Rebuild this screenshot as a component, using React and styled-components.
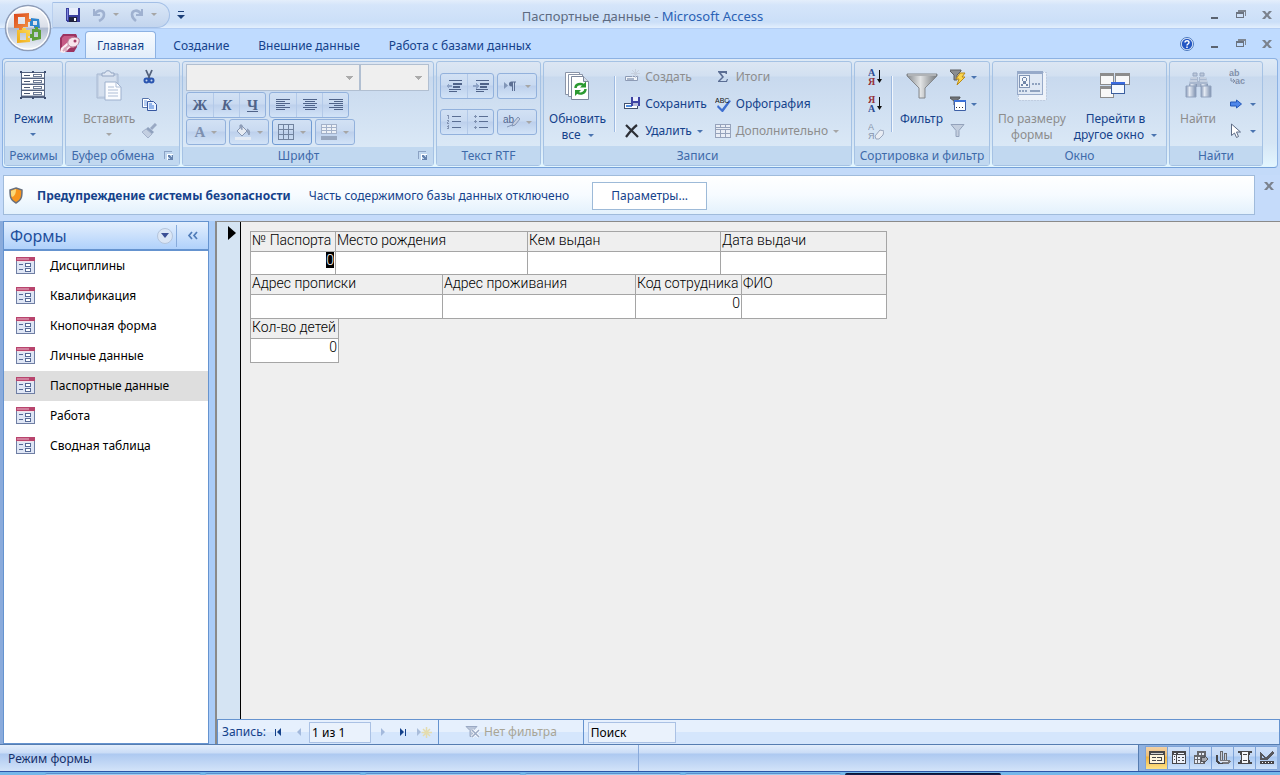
import React, { useEffect, useRef } from "react";
import styled, { createGlobalStyle } from "styled-components";

const forms = [
  "Дисциплины",
  "Квалификация",
  "Кнопочная форма",
  "Личные данные",
  "Паспортные данные",
  "Работа",
  "Сводная таблица",
];

const fieldRows = [
  {
    columns: "84px 191px 192px 165px",
    fields: [
      { id: "passport", label: "№ Паспорта", value: "0", first: true },
      { id: "birthplace", label: "Место рождения", value: "" },
      { id: "issuer", label: "Кем выдан", value: "" },
      { id: "issued", label: "Дата выдачи", value: "" },
    ],
  },
  {
    columns: "191px 192px 105px 144px",
    fields: [
      { id: "registered", label: "Адрес прописки", value: "" },
      { id: "residence", label: "Адрес проживания", value: "" },
      { id: "employee", label: "Код сотрудника", value: "0" },
      { id: "fullname", label: "ФИО", value: "" },
    ],
  },
  {
    columns: "87px",
    fields: [{ id: "children", label: "Кол-во детей", value: "0" }],
  },
];

const App = () => {
  return (
    <>
      <GlobalStyle />
      <Window>
        <OfficeButton aria-label="Кнопка Office">
          <OfficeLogo />
        </OfficeButton>
        <TitleBar />
        <TabBar />
        <Ribbon />
        <SecurityBar />
        <Workspace>
          <NavigationPane />
          <Document />
        </Workspace>
        <StatusBar />
        <Taskbar>
          <Task />
          <Task />
          <Task />
          <Task />
          <Task />
          <Task $active />
        </Taskbar>
      </Window>
    </>
  );
};

export default App;

const TitleBar = () => (
  <TitleRow>
    <QuickAccess>
      <IconButton aria-label="Сохранить">
        <SaveIcon />
      </IconButton>
      <IconButton aria-label="Отменить" disabled>
        <UndoIcon />
        <Caret $muted />
      </IconButton>
      <IconButton aria-label="Вернуть" disabled>
        <RedoIcon />
        <Caret $muted />
      </IconButton>
    </QuickAccess>
    <IconButton aria-label="Настройка панели быстрого доступа">
      <CustomizeIcon />
    </IconButton>
    <WindowTitle>
      <span>Паспортные данные -</span> Microsoft Access
    </WindowTitle>
    <WindowControls />
  </TitleRow>
);

const WindowControls = () => (
  <Controls>
    <IconButton aria-label="Свернуть">
      <svg width="10" height="12" viewBox="0 0 10 12">
        <path d="M1 8h7v2H1z" fill="#5b6370" />
      </svg>
    </IconButton>
    <IconButton aria-label="Восстановить">
      <svg width="10" height="12" viewBox="0 0 10 12" shapeRendering="crispEdges">
        <path d="M2 1h8v6H9V3H2z" fill="#7f8792" />
        <path d="M0 3h8v6H0zM1 5v3h6V5z" fill="#6b737f" fillRule="evenodd" />
      </svg>
    </IconButton>
    <IconButton aria-label="Закрыть">
      <CloseIcon />
    </IconButton>
  </Controls>
);

const TabBar = () => (
  <TabRow>
    <AccessIcon />
    <Tabs>
      <Tab $active>Главная</Tab>
      <Tab>Создание</Tab>
      <Tab>Внешние данные</Tab>
      <Tab>Работа с базами данных</Tab>
    </Tabs>
    <IconButton aria-label="Справка">
      <HelpIcon />
    </IconButton>
    <WindowControls />
  </TabRow>
);

const Ribbon = () => (
  <RibbonPanel>
    <Group $width="59px">
      <GroupBody>
        <LargeButton>
          <ModeIcon />
          <span>Режим</span>
          <Caret />
        </LargeButton>
      </GroupBody>
      <GroupLabel>Режимы</GroupLabel>
    </Group>

    <Group $width="115px">
      <GroupBody $gap="6px" $pad="17px">
        <LargeButton disabled>
          <PasteIcon />
          <span>Вставить</span>
          <Caret $muted />
        </LargeButton>
        <CommandColumn>
          <Command aria-label="Вырезать">
            <CutIcon />
          </Command>
          <Command aria-label="Копировать">
            <CopyIcon />
          </Command>
          <Command aria-label="Формат по образцу" disabled>
            <BrushIcon />
          </Command>
        </CommandColumn>
      </GroupBody>
      <GroupLabel $launcher>
        <span>Буфер обмена</span>
        <LauncherIcon />
      </GroupLabel>
    </Group>

    <Group $width="252px">
      <FontBody>
        <FontRow $gap="0">
          <FontSelect aria-label="Шрифт" $width="174px" disabled />
          <FontSelect aria-label="Размер шрифта" $width="69px" disabled />
        </FontRow>
        <FontRow>
          <ButtonSet>
            <ToolButton disabled>Ж</ToolButton>
            <ToolButton $italic disabled>К</ToolButton>
            <ToolButton $underline disabled>Ч</ToolButton>
          </ButtonSet>
          <ButtonSet>
            <ToolButton aria-label="По левому краю" disabled>
              <AlignIcon x={[0, 0, 0, 0, 0, 0]} />
            </ToolButton>
            <ToolButton aria-label="По центру" disabled>
              <AlignIcon x={[0, 2, 0, 2, 0, 2]} />
            </ToolButton>
            <ToolButton aria-label="По правому краю" disabled>
              <AlignIcon x={[0, 5, 0, 5, 0, 5]} />
            </ToolButton>
          </ButtonSet>
        </FontRow>
        <FontRow>
          <ButtonSet>
            <ToolButton $wide $faded disabled>
              А<Caret $muted />
            </ToolButton>
          </ButtonSet>
          <ButtonSet>
            <ToolButton $wide aria-label="Цвет заливки" disabled>
              <FillIcon />
              <Caret $muted />
            </ToolButton>
          </ButtonSet>
          <ButtonSet $strong>
            <ToolButton $wide aria-label="Сетка" disabled>
              <GridIcon />
              <Caret $muted />
            </ToolButton>
          </ButtonSet>
          <ButtonSet>
            <ToolButton $wide aria-label="Цвет строк" disabled>
              <RowColorIcon />
              <Caret $muted />
            </ToolButton>
          </ButtonSet>
        </FontRow>
      </FontBody>
      <GroupLabel $launcher>
        <span>Шрифт</span>
        <LauncherIcon />
      </GroupLabel>
    </Group>

    <Group $width="105px">
      <RtfBody>
        <FontRow>
          <ButtonSet>
            <ToolButton aria-label="Уменьшить отступ" disabled>
              <IndentIcon />
            </ToolButton>
            <ToolButton aria-label="Увеличить отступ" disabled>
              <IndentIcon right />
            </ToolButton>
          </ButtonSet>
          <ButtonSet>
            <ToolButton $wide aria-label="Направление текста" disabled>
              <ParagraphIcon />
              <Caret $muted />
            </ToolButton>
          </ButtonSet>
        </FontRow>
        <FontRow>
          <ButtonSet>
            <ToolButton aria-label="Нумерация" disabled>
              <NumberingIcon />
            </ToolButton>
            <ToolButton aria-label="Маркеры" disabled>
              <BulletsIcon />
            </ToolButton>
          </ButtonSet>
          <ButtonSet>
            <ToolButton $wide aria-label="Цвет выделения" disabled>
              <HighlightIcon />
              <Caret $muted />
            </ToolButton>
          </ButtonSet>
        </FontRow>
      </RtfBody>
      <GroupLabel>Текст RTF</GroupLabel>
    </Group>

    <Group $width="309px">
      <GroupBody $gap="8px" $pad="5px">
        <LargeButton>
          <RefreshIcon />
          <span>Обновить</span>
          <span>
            все <Caret $inline />
          </span>
        </LargeButton>
        <Separator />
        <CommandColumn>
          <Command disabled>
            <NewRecordIcon />
            Создать
          </Command>
          <Command>
            <SaveRecordIcon />
            Сохранить
          </Command>
          <Command>
            <DeleteIcon />
            Удалить
            <Caret />
          </Command>
        </CommandColumn>
        <CommandColumn>
          <Command disabled>
            <SigmaIcon />
            Итоги
          </Command>
          <Command>
            <SpellingIcon />
            Орфография
          </Command>
          <Command disabled>
            <MoreIcon />
            Дополнительно
            <Caret $muted />
          </Command>
        </CommandColumn>
      </GroupBody>
      <GroupLabel>Записи</GroupLabel>
    </Group>

    <Group $width="136px">
      <GroupBody $gap="7px" $pad="13px">
        <CommandColumn>
          <Command aria-label="По возрастанию">
            <SortIcon top="А" bottom="Я" />
          </Command>
          <Command aria-label="По убыванию">
            <SortIcon top="Я" bottom="А" />
          </Command>
          <Command aria-label="Очистить сортировку" disabled>
            <ClearSortIcon />
          </Command>
        </CommandColumn>
        <Separator />
        <LargeButton>
          <FilterIcon />
          <span>Фильтр</span>
        </LargeButton>
        <CommandColumn>
          <Command aria-label="Выделение">
            <SelectionFilterIcon />
            <Caret />
          </Command>
          <Command aria-label="Дополнительно">
            <AdvancedFilterIcon />
            <Caret />
          </Command>
          <Command aria-label="Применить фильтр" disabled>
            <ToggleFilterIcon />
          </Command>
        </CommandColumn>
      </GroupBody>
      <GroupLabel>Сортировка и фильтр</GroupLabel>
    </Group>

    <Group $width="175px">
      <GroupBody $gap="8px" $pad="5px">
        <LargeButton disabled>
          <FitFormIcon />
          <span>По размеру</span>
          <span>формы</span>
        </LargeButton>
        <LargeButton>
          <SwitchWindowIcon />
          <span>Перейти в</span>
          <span>
            другое окно <Caret $inline />
          </span>
        </LargeButton>
      </GroupBody>
      <GroupLabel>Окно</GroupLabel>
    </Group>

    <Group $width="94px">
      <GroupBody $gap="13px" $pad="10px">
        <LargeButton disabled>
          <BinocularsIcon />
          <span>Найти</span>
        </LargeButton>
        <CommandColumn>
          <Command aria-label="Заменить" disabled>
            <ReplaceIcon />
          </Command>
          <Command aria-label="Перейти">
            <GoToIcon />
            <Caret />
          </Command>
          <Command aria-label="Выбрать">
            <PointerIcon />
            <Caret />
          </Command>
        </CommandColumn>
      </GroupBody>
      <GroupLabel>Найти</GroupLabel>
    </Group>
  </RibbonPanel>
);

const SecurityBar = () => (
  <SecurityRow>
    <SecurityMessage>
      <ShieldIcon />
      <strong>Предупреждение системы безопасности</strong>
      <span>Часть содержимого базы данных отключено</span>
      <OptionsButton>Параметры...</OptionsButton>
    </SecurityMessage>
    <IconButton aria-label="Закрыть предупреждение">
      <CloseIcon />
    </IconButton>
  </SecurityRow>
);

const NavigationPane = () => (
  <Pane>
    <PaneHeader>
      <PaneTitle>Формы</PaneTitle>
      <RoundButton aria-label="Категория">
        <svg width="8" height="5" viewBox="0 0 8 5">
          <path d="M0 0h8L4 5z" fill="#3c4f94" />
        </svg>
      </RoundButton>
      <PaneDivider />
      <IconButton aria-label="Свернуть область">
        <svg width="12" height="10" viewBox="0 0 12 10">
          <path d="M5 1L2 4.500L5 8M10 1L7 4.500L10 8" fill="none" stroke="#4f7bb8" strokeWidth="1.700" />
        </svg>
      </IconButton>
    </PaneHeader>
    <FormList>
      {forms.map((name) => (
        <li key={name}>
          <FormLink href="#" $selected={name === "Паспортные данные"}>
            <FormIcon />
            {name}
          </FormLink>
        </li>
      ))}
    </FormList>
  </Pane>
);

const Document = () => {
  const firstField = useRef(null);

  useEffect(() => {
    firstField.current.focus();
    firstField.current.select();
  }, []);

  return (
    <DocumentPanel>
      <FormView>
        <RecordSelector>
          <svg width="8" height="14" viewBox="0 0 8 14">
            <path d="M0 0L8 7L0 14z" fill="#000" />
          </svg>
        </RecordSelector>
        <FormFields>
          {fieldRows.map((row) => (
            <FieldRow key={row.columns} $columns={row.columns}>
              {row.fields.map((field) => (
                <FieldCell key={field.id}>
                  <FieldLabel htmlFor={field.id}>{field.label}</FieldLabel>
                  <FieldInput
                    id={field.id}
                    ref={field.first ? firstField : null}
                    defaultValue={field.value}
                  />
                </FieldCell>
              ))}
            </FieldRow>
          ))}
        </FormFields>
      </FormView>
      <RecordNav>
        <NavLabel htmlFor="record">Запись:</NavLabel>
        <NavButton aria-label="Первая запись">
          <RecordArrow d="M1 1h1v7H1zM7 0v8L3 4z" />
        </NavButton>
        <NavButton aria-label="Предыдущая запись" disabled>
          <RecordArrow d="M6 0v8L2 4z" />
        </NavButton>
        <NavInput id="record" defaultValue="1 из 1" $width="62px" />
        <NavButton aria-label="Следующая запись" disabled>
          <RecordArrow d="M3 0v8L7 4z" />
        </NavButton>
        <NavButton aria-label="Последняя запись">
          <RecordArrow d="M1 0v8L5 4zM6 1h1v7H6z" />
        </NavButton>
        <NavButton aria-label="Новая запись" disabled>
          <svg width="16" height="11" viewBox="0 0 16 11">
            <path d="M1 1v8L5 5z" fill="#a9bddb" />
            <path d="M10.500 0v11M5.500 5.500H16M7 2L14 9M14 2L7 9" stroke="#e4dcae" strokeWidth="1.500" />
          </svg>
        </NavButton>
        <NavDivider />
        <FilterState disabled>
          <NoFilterIcon />
          Нет фильтра
        </FilterState>
        <NavDivider />
        <NavInput aria-label="Поиск" defaultValue="Поиск" $width="88px" />
      </RecordNav>
    </DocumentPanel>
  );
};

const StatusBar = () => (
  <StatusRow>
    <StatusText>Режим формы</StatusText>
    <StatusDetail />
    <ViewButtons>
      <ViewButton aria-label="Режим формы" $active>
        <ViewIcon>
          <path d="M0 0h16v13H0zM1 4v8h14V4z" fill="#47474a" fillRule="evenodd" />
          <path d="M1 4h14v8H1z" fill="#fff6de" />
          <path d="M2 2h12v1H2z" fill="#d2d2d2" />
          <path d="M3 6h4v1H3zM3 9h4v1H3zM8 6h5v1H8zM8 9h5v1H8zM12 7h1v2h-1z" fill="#47474a" />
        </ViewIcon>
      </ViewButton>
      <ViewButton aria-label="Режим таблицы">
        <ViewIcon>
          <path d="M1 0h14v13H1z" fill="#47474a" />
          <path d="M3 2h2v1H3zM7 2h6v1H7zM2 4h3v8H2zM6 4h8v8H6z" fill="#eef2fa" />
          <path d="M3 5h1v1H3zM3 8h1v1H3zM7 6h2v1H7zM11 6h2v1h-2zM7 9h2v1H7zM11 9h2v1h-2z" fill="#47474a" />
        </ViewIcon>
      </ViewButton>
      <ViewButton aria-label="Сводная таблица">
        <ViewIcon>
          <path d="M4 0h9v9H4zM1 4h11v9H1z" fill="#66676c" />
          <path d="M6 2h2v2H6zM9 2h2v2H9zM2 6h2v2H2zM5 6h2v2H5zM2 9h2v3H2zM5 9h2v3H5zM8 10h2v2H8z" fill="#e7ecf5" />
          <path d="M8 6h3V4l4 4l-4 4v-2H8z" fill="#a4a6ad" stroke="#55565b" />
        </ViewIcon>
      </ViewButton>
      <ViewButton aria-label="Сводная диаграмма">
        <ViewIcon>
          <path d="M5 0h3v9H5zM9 2h3v7H9z" fill="#66676c" />
          <path d="M6 1h1v8H6zM10 3h1v6h-1z" fill="#c9cdd6" />
          <path d="M1 4h2v6l2 2h7v1H3l-2-2z" fill="#47474a" />
          <path d="M5 9h9l2 1l-3 3H8z" fill="#77797f" />
          <path d="M5 10h8v1H5z" fill="#e1e5ee" />
        </ViewIcon>
      </ViewButton>
      <ViewButton aria-label="Режим макета">
        <ViewIcon>
          <path d="M4 1h8v11H4z" fill="#f5f7fb" />
          <path d="M1 0h4v2H1zM11 0h4v2h-4zM3 2h2v2H3zM11 2h2v2h-2zM3 9h2v2H3zM11 9h2v2h-2zM1 11h4v2H1zM11 11h4v2h-4zM5 0h6v1H5zM5 12h6v1H5zM6 3h4v1H6zM6 9h4v1H6zM4 4h1v5H4zM11 4h1v5h-1z" fill="#47474a" />
        </ViewIcon>
      </ViewButton>
      <ViewButton aria-label="Конструктор">
        <ViewIcon>
          <path d="M1 1v8h8zM3 5v2h2z" fill="#57585d" fillRule="evenodd" />
          <path d="M6 7l2 2L15 2L13 0z" fill="#57585d" />
          <path d="M1 10h14v3H1z" fill="#47474a" />
          <path d="M3 11h1v1H3zM6 11h1v1H6zM9 11h1v1H9zM12 11h1v1h-1z" fill="#fff" />
        </ViewIcon>
      </ViewButton>
    </ViewButtons>
  </StatusRow>
);

/* icons */

const OfficeLogo = () => (
  <svg width="48" height="48" viewBox="0 0 48 48">
    <defs>
      <linearGradient id="orb" x1="0" y1="0" x2="0" y2="1">
        <stop offset="0" stopColor="#fbfbfc" />
        <stop offset="0.48" stopColor="#d9dee8" />
        <stop offset="0.5" stopColor="#aebacf" />
        <stop offset="1" stopColor="#f5f8fb" />
      </linearGradient>
      <linearGradient id="red" x1="0" y1="0" x2="1" y2="1">
        <stop offset="0" stopColor="#d9431a" />
        <stop offset="1" stopColor="#f7a14a" />
      </linearGradient>
      <linearGradient id="yellow" x1="0" y1="1" x2="1" y2="0">
        <stop offset="0" stopColor="#f0a813" />
        <stop offset="1" stopColor="#fbdc5c" />
      </linearGradient>
    </defs>
    <circle cx="24" cy="24" r="22.500" fill="url(#orb)" stroke="#8e9db8" strokeWidth="1.500" />
    <circle cx="24" cy="24" r="21" fill="none" stroke="#fff" strokeWidth="1.200" />
    <path d="M10 10l15-1v6l3 0v3h-4v5h-5v3h-4v-2l-5 0zM14 13v7h7v-7z" fill="url(#red)" fillRule="evenodd" />
    <path d="M27 14l8 1l1 9l-6 0v-2h-4v-5h1zM29 17v4h4v-4z" fill="#2f86cf" fillRule="evenodd" />
    <path d="M13 26l5 0v-2h4v2h4v6h-2v2h2v4l-13 1zM16 29v7h6v-7z" fill="url(#yellow)" fillRule="evenodd" />
    <path d="M28 25h3v-2h3v2l3 1v9l-9 2v-3h-2v-4h2zM30 28v5h4v-5z" fill="#5d9e3b" fillRule="evenodd" />
  </svg>
);

const SaveIcon = () => (
  <svg width="16" height="16" viewBox="0 0 16 16" shapeRendering="crispEdges">
    <path d="M1 1h14v14H2l-1-1z" fill="#3a3f9e" />
    <path d="M4 1h9v7H4z" fill="#e8eefc" />
    <path d="M4 10h8v5H4z" fill="#20233f" />
    <path d="M9 11h2v3H9z" fill="#fff" />
    <path d="M2 2h1v11H2z" fill="#7f86dc" />
  </svg>
);

const UndoIcon = () => (
  <svg width="16" height="16" viewBox="0 0 16 16">
    <path d="M3 2v6h6" fill="none" stroke="#9fb1d0" strokeWidth="2" />
    <path d="M4 7C7 2 13 3 13 7.500C13 10.500 11 12.500 8 14" fill="none" stroke="#9fb1d0" strokeWidth="2.600" />
  </svg>
);

const RedoIcon = () => (
  <svg width="16" height="16" viewBox="0 0 16 16">
    <path d="M13 2v6H7" fill="none" stroke="#9fb1d0" strokeWidth="2" />
    <path d="M12 7C9 2 3 3 3 7.500C3 10.500 5 12.500 7 14" fill="none" stroke="#9fb1d0" strokeWidth="2.600" />
  </svg>
);

const CustomizeIcon = () => (
  <svg width="8" height="10" viewBox="0 0 8 10">
    <path d="M1 1h6v1H1zM0 5h8L4 9z" fill="#1c4079" />
  </svg>
);

const CloseIcon = () => (
  <svg width="10" height="12" viewBox="0 0 10 12">
    <path d="M0 2h3l2 2.500l2-2.500h3L6.500 6L10 10H7L5 7.500L3 10H0l3.500-4z" fill="#7b828d" />
  </svg>
);

const AccessIcon = () => (
  <svg width="20" height="20" viewBox="0 0 20 20">
    <path d="M0 4l3-4h13l1 2v11l-3 5H0z" fill="#9c3360" />
    <path d="M2 4l2-2h10v12H2z" fill="#c65b85" />
    <path d="M1 14l7-6l4 4l-8 7l-4-1z" fill="#fbeef3" />
    <path d="M3 17L10 10M4 14l3 3" stroke="#d8a5ba" strokeWidth="2" />
    <path d="M8 7c1-4 8-5 11-2c1 4-2 8-6 8c-3 0-6-2-5-6z" fill="#f8e4ec" stroke="#b57c95" />
    <circle cx="15" cy="7" r="1.500" fill="#a63b67" />
  </svg>
);

const HelpIcon = () => (
  <svg width="14" height="14" viewBox="0 0 14 14">
    <circle cx="7" cy="7" r="6.500" fill="#e9f1fc" stroke="#4b78bd" />
    <circle cx="7" cy="7" r="5.200" fill="#2457c4" />
    <path d="M5 5.500C5 3 9.200 3 9 5.500C9 7 7 7 7 8.500M7 9.500v1.500" fill="none" stroke="#fff" strokeWidth="1.500" />
  </svg>
);

const ModeIcon = () => (
  <svg width="32" height="32" viewBox="0 0 32 32" shapeRendering="crispEdges">
    <path d="M5 3h22v25H5z" fill="#fff" />
    <path d="M4 2h1v26H4zM27 2h1v26h-1zM5 2h22v1H5zM5 8h22v1H5zM5 14h22v1H5zM5 20h22v1H5zM5 26h22v2H5z" fill="#53627f" />
    <path d="M5 7h22v1H5zM5 13h22v1H5zM5 19h22v1H5zM5 25h22v1H5z" fill="#b3bccb" />
    <path d="M7 5h6v1H7zM7 11h6v1H7zM7 17h6v1H7zM7 23h6v1H7z" fill="#4b5871" />
    <path d="M16 4h9v3h-9zM16 10h9v3h-9zM16 16h9v3h-9zM16 22h9v3h-9z" fill="#6c7a94" />
    <path d="M17 5h7v1h-7zM17 11h7v1h-7zM17 17h7v1h-7zM17 23h7v1h-7z" fill="#fff" />
    <path d="M3 1h2v2H3zM15 1h2v2h-2zM27 1h2v2h-2zM3 27h2v2H3zM15 27h2v2h-2zM27 27h2v2h-2z" fill="#3d4d70" />
  </svg>
);

const PasteIcon = () => (
  <svg width="32" height="32" viewBox="0 0 32 32">
    <path d="M4 4h21v24H4z" fill="#c5d3e6" stroke="#a9b9d2" />
    <path d="M6 6h17v20H6z" fill="#d4dfee" />
    <path d="M9 6V3h3c0-3 6-3 6 0h3v3z" fill="#dfe7f3" stroke="#93a5c2" />
    <path d="M12 12h11l5 5v13H12z" fill="#fafcff" stroke="#9db0cd" />
    <path d="M23 12v5h5M15 17h6M15 20h10M15 23h10M15 26h10" fill="none" stroke="#aebed6" />
  </svg>
);

const CutIcon = () => (
  <svg width="16" height="16" viewBox="0 0 16 16">
    <path d="M5 1l4 9M11 1L7 10" stroke="#53617c" strokeWidth="1.800" />
    <circle cx="5.500" cy="11.500" r="2" fill="none" stroke="#2a55b0" strokeWidth="2" />
    <circle cx="10.500" cy="11.500" r="2" fill="none" stroke="#2a55b0" strokeWidth="2" />
  </svg>
);

const CopyIcon = () => (
  <svg width="16" height="16" viewBox="0 0 16 16">
    <path d="M1.500 2.500h6l2 2v7h-8z" fill="#fff" stroke="#5573ab" />
    <path d="M3 5h3M3 7h3M3 9h3" stroke="#6f9be0" />
    <path d="M6.500 5.500h6l3 3v6h-9z" fill="#eaf2ff" stroke="#3556a0" />
    <path d="M8 8h3M8 10h5M8 12h5" stroke="#3a76d6" />
  </svg>
);

const BrushIcon = () => (
  <svg width="16" height="16" viewBox="0 0 16 16">
    <path d="M15 1L10 6" stroke="#99a9c4" strokeWidth="3" />
    <path d="M7 4l6 5l-2 2L5 6z" fill="#8fa1be" />
    <path d="M5 6l6 5l-4 4L1 9z" fill="#c3cfe1" stroke="#a3b2cb" />
  </svg>
);

const LauncherIcon = () => (
  <svg width="10" height="10" viewBox="0 0 10 10" shapeRendering="crispEdges">
    <path d="M0 0h8v1H1v7H0z" fill="#8ba2c4" />
    <path d="M3 3h6v6H3zM4 4v4h4V4z" fill="#fff" fillRule="evenodd" />
    <path d="M8 4h1v5H4V8h2L4 6V4h1l3 3z" fill="#6683ae" />
  </svg>
);

const AlignIcon = ({ x }) => (
  <svg width="14" height="12" viewBox="0 0 14 12" shapeRendering="crispEdges">
    {x.map((start, i) => (
      <rect key={i} x={start} y={i * 2} height="1" width={i % 2 ? (start === 2 ? 10 : 9) : 14} fill="#4f6389" />
    ))}
  </svg>
);

const FillIcon = () => (
  <svg width="16" height="16" viewBox="0 0 16 16">
    <path d="M7 2l5 5l-5 5l-5-5z" fill="#e6ebf3" stroke="#8696b2" />
    <path d="M5 4V1h2v5M12 5c3 1 3 4 2 6l-2-4" fill="#9aa9c3" stroke="#8696b2" />
    <path d="M0 13h16v3H0z" fill="#e4ebf5" />
  </svg>
);

const GridIcon = () => (
  <svg width="16" height="16" viewBox="0 0 16 16" shapeRendering="crispEdges">
    <path d="M0 0h16v16H0zM1 1v4h4V1zM6 1v4h4V1zM11 1v4h4V1zM1 6v4h4V6zM6 6v4h4V6zM11 6v4h4V6zM1 11v4h4v-4zM6 11v4h4v-4zM11 11v4h4v-4z" fill="#71839f" fillRule="evenodd" />
  </svg>
);

const RowColorIcon = () => (
  <svg width="16" height="16" viewBox="0 0 16 16" shapeRendering="crispEdges">
    <path d="M0 0h16v10H0z" fill="#a3b1c9" />
    <path d="M1 1h4v2H1zM6 1h4v2H6zM11 1h4v2h-4zM1 4h4v2H1zM6 4h4v2H6zM11 4h4v2h-4zM1 7h4v2H1zM6 7h4v2H6zM11 7h4v2h-4z" fill="#edf1f7" />
    <path d="M0 12h16v4H0z" fill="#98a7bf" />
  </svg>
);

const IndentIcon = ({ right }) => (
  <svg width="16" height="14" viewBox="0 0 16 14" shapeRendering="crispEdges">
    <path d="M3 1h13v1H3zM7 4h9v2H7zM7 7h7v2H7zM3 10h12v1H3zM3 12h8v1H3z" fill="#4f6389" />
    <path d={right ? "M0 6h3V4l3 3l-3 3V8H0z" : "M6 6H3V4L0 7l3 3V8h3z"} fill="#8ea3c6" />
  </svg>
);

const ParagraphIcon = () => (
  <svg width="16" height="14" viewBox="0 0 16 14">
    <path d="M1 3v7l4-3.500z" fill="#8296b8" />
    <path d="M13 2.500H8.500a2.500 2.500 0 0 0 0 5H9V12h1V3.500h1V12h1V3.500h1z" fill="#5c6f93" />
  </svg>
);

const NumberingIcon = () => (
  <svg width="16" height="14" viewBox="0 0 16 14" shapeRendering="crispEdges">
    <path d="M6 1h9v1H6zM6 6h9v1H6zM6 12h9v1H6z" fill="#5a6e93" />
    <path d="M1 0h2v4H2V1H1zM1 5h2v2H2v1h1v1H1V7h1V6H1zM1 10h2v4H1v-1h1v-1H1v-1h1z" fill="#8394b3" />
  </svg>
);

const BulletsIcon = () => (
  <svg width="16" height="14" viewBox="0 0 16 14" shapeRendering="crispEdges">
    <path d="M6 1h9v1H6zM6 6h9v1H6zM6 12h9v1H6z" fill="#5a6e93" />
    <path d="M1 1h3v1H1zM2 0h1v3H2zM1 6h3v1H1zM2 5h1v3H2zM1 12h3v1H1zM2 11h1v3H2z" fill="#7e90b0" />
  </svg>
);

const HighlightIcon = () => (
  <svg width="17" height="16" viewBox="0 0 17 16">
    <text x="0" y="9" fontFamily="Liberation Sans" fontSize="10" fontWeight="400" fill="#53678e">
      ab
    </text>
    <path d="M15 3l2 2l-5 6l-3 1l1-3z" fill="#c6d0e1" stroke="#8496b6" />
    <path d="M4 13l5-2" stroke="#8496b6" />
  </svg>
);

const RefreshIcon = () => (
  <svg width="32" height="32" viewBox="0 0 32 32">
    <path d="M3.500 2.500h14v22h-14z" fill="#fff" stroke="#8b95a8" />
    <path d="M6.500 4.500h14v22h-14z" fill="#fff" stroke="#8b95a8" />
    <path d="M9.500 6.500h12l5 5v18h-17z" fill="#fff" stroke="#7c879c" />
    <path d="M21.500 6.500v5h5" fill="#d5dde9" stroke="#7c879c" />
    <path d="M13.500 18c0-4 5-5 8-3M23.500 19c0 4-5 6-8 3.500" fill="none" stroke="#2c9a31" strokeWidth="2.400" />
    <path d="M24 11.500v6h-6zM13 26v-6h6z" fill="#2c9a31" />
  </svg>
);

const NewRecordIcon = () => (
  <svg width="16" height="16" viewBox="0 0 16 16">
    <path d="M1.500 7.500h12v4h-12z" fill="#f1f4f9" stroke="#8d9bb5" />
    <path d="M3 9h7v2H3z" fill="#a8b5ca" />
    <path d="M11.500 0v9M7 4.500h9M8 1l7 7M15 1L8 8" stroke="#c7d0de" />
  </svg>
);

const SaveRecordIcon = () => (
  <svg width="16" height="16" viewBox="0 0 16 16" shapeRendering="crispEdges">
    <path d="M0 7h14v6H0z" fill="#41516f" />
    <path d="M1 8h12v4H1z" fill="#fff" />
    <path d="M2 9h6v2H2z" fill="#4f8de0" />
    <path d="M7 1h9v9H7z" fill="#3d44a3" />
    <path d="M9 1h5v4H9z" fill="#e7ecfa" />
    <path d="M9 7h5v3H9z" fill="#b7bfdc" />
  </svg>
);

const DeleteIcon = () => (
  <svg width="16" height="16" viewBox="0 0 16 16">
    <path d="M2 2C6 6 9 9 14 14M13 2C9 5 5 10 2 14" fill="none" stroke="#2c2f36" strokeWidth="2.200" />
  </svg>
);

const SigmaIcon = () => (
  <svg width="16" height="16" viewBox="0 0 16 16">
    <path d="M3 2h9v3h-1l-1-1H6l3 4l-4 4h6l1-2h1l-1 3H3v-1l4-4l-4-5z" fill="#5a6d93" />
  </svg>
);

const SpellingIcon = () => (
  <svg width="16" height="17" viewBox="0 0 16 17">
    <path d="M3 9l4 4l7-9l2 1L8 16H7L2 11z" fill="#3e6fd0" />
    <text x="0" y="7" fontFamily="Liberation Sans" fontSize="7" fill="#111">
      ABC
    </text>
  </svg>
);

const MoreIcon = () => (
  <svg width="16" height="16" viewBox="0 0 16 16" shapeRendering="crispEdges">
    <path d="M0 1h16v14H0z" fill="#96a3bb" />
    <path d="M1 5h14v1H1zM1 2h4v2H1zM6 2h4v2H6zM11 2h4v2h-4zM1 7h4v3H1zM6 7h4v3H6zM11 7h4v3h-4zM1 11h4v3H1zM6 11h4v3H6zM11 11h4v3h-4z" fill="#e8edf5" />
  </svg>
);

const SortIcon = ({ top, bottom }) => (
  <svg width="16" height="18" viewBox="0 0 16 18">
    <text x="0" y="8" fontFamily="Liberation Serif" fontSize="10" fontWeight="700" fill={top === "А" ? "#2d4b92" : "#94303a"}>
      {top}
    </text>
    <text x="0" y="17" fontFamily="Liberation Serif" fontSize="10" fontWeight="700" fill={top === "А" ? "#94303a" : "#2d4b92"}>
      {bottom}
    </text>
    <path d="M11 2h1v9h2l-2.500 4L9 11h2z" fill="#111" />
  </svg>
);

const ClearSortIcon = () => (
  <svg width="16" height="18" viewBox="0 0 16 18">
    <text x="0" y="8" fontFamily="Liberation Sans" fontSize="9" fill="#8794ab">
      А
    </text>
    <text x="0" y="17" fontFamily="Liberation Sans" fontSize="9" fill="#8794ab">
      Я
    </text>
    <path d="M12 8l4 1l-1 4l-4 4H8l-1-3z" fill="#e9edf4" stroke="#9ba7bd" />
  </svg>
);

const FilterIcon = () => (
  <svg width="32" height="32" viewBox="0 0 32 32">
    <defs>
      <linearGradient id="funnel">
        <stop offset="0" stopColor="#85898d" />
        <stop offset="0.45" stopColor="#e2e4e5" />
        <stop offset="1" stopColor="#73777b" />
      </linearGradient>
    </defs>
    <path d="M1 4h30v2L19 18v10h-6V18L1 6z" fill="url(#funnel)" stroke="#84888d" />
    <path d="M2 5h28" stroke="#b0b3b6" strokeWidth="2" />
  </svg>
);

const SelectionFilterIcon = () => (
  <svg width="16" height="16" viewBox="0 0 16 16">
    <path d="M0 1h11v1L7 6v5H4V6L0 2z" fill="#8a8d90" stroke="#5c5f63" />
    <path d="M10 4h5l-3 4h3l-8 8l2-6H6z" fill="#fbd54d" stroke="#b98a19" />
  </svg>
);

const AdvancedFilterIcon = () => (
  <svg width="16" height="16" viewBox="0 0 16 16">
    <path d="M0 1h10v1L6 5v4H4V5L0 2z" fill="#707478" stroke="#55585c" />
    <path d="M4.500 4.500h11v10h-11z" fill="#fff" stroke="#3d5fa5" />
    <path d="M4 4h12v2H4z" fill="#3b71d8" />
    <path d="M6 11h1v1H6zM9 11h1v1H9zM12 11h1v1h-1z" fill="#333" />
  </svg>
);

const ToggleFilterIcon = () => (
  <svg width="16" height="16" viewBox="0 0 16 16">
    <path d="M1 1.500h13l-5 6v6H6v-6z" fill="#c3cede" stroke="#93a2bb" />
  </svg>
);

const NoFilterIcon = () => (
  <svg width="16" height="14" viewBox="0 0 16 14">
    <path d="M1 1.500h11l-4 4v6H5v-6z" fill="#b9c5d9" stroke="#9aa9c4" />
    <path d="M7 5l7 7M14 5l-7 7" stroke="#fff" strokeWidth="3" />
    <path d="M7 5l7 7M14 5l-7 7" stroke="#9aa9c4" strokeWidth="1.500" />
  </svg>
);

const FitFormIcon = () => (
  <svg width="32" height="32" viewBox="0 0 32 32" shapeRendering="crispEdges">
    <path d="M2 2h28v28H2z" fill="#eef3fa" stroke="#c0cde0" strokeDasharray="2 1" />
    <path d="M1 1h26v24H1z" fill="#97aac9" />
    <path d="M2 4h24v20H2z" fill="#dfe8f4" />
    <path d="M3 5h11v13H3z" fill="#8195b5" />
    <path d="M4 6h9v11H4z" fill="#f2f6fb" />
    <path d="M7 7h3v1H7zM6 8h1v3H6zM10 8h1v3h-1zM7 11h3v2H7zM5 14h2v2H5zM10 14h2v2h-2zM7 13h3v1H7z" fill="#7187aa" />
    <path d="M16 13h2v2h-2zM19 13h2v2h-2zM22 13h2v2h-2zM3 20h2v2H3zM6 20h2v2H6zM9 20h2v2H9zM14 20h10v2H14z" fill="#8fa2bf" />
  </svg>
);

const SwitchWindowIcon = () => (
  <svg width="32" height="32" viewBox="0 0 32 32" shapeRendering="crispEdges">
    <path d="M1 3h14v12H1zM16 3h15v12H16zM1 16h14v12H1z" fill="#8c8c8c" />
    <path d="M2 6h12v8H2zM17 6h13v8H17zM2 19h12v8H2z" fill="#f8f8f8" />
    <path d="M12 12h14v12H12z" fill="#3c5f9f" />
    <path d="M12 12h14v2H12z" fill="#3b6be0" />
    <path d="M13 15h12v8H13z" fill="#f4f9ff" />
  </svg>
);

const BinocularsIcon = () => (
  <svg width="32" height="32" viewBox="0 0 32 32">
    <defs>
      <linearGradient id="tube">
        <stop offset="0" stopColor="#8698b6" />
        <stop offset="0.35" stopColor="#e4eaf3" />
        <stop offset="1" stopColor="#7c8fae" />
      </linearGradient>
    </defs>
    <path d="M11 3h4v3h-4zM18 3h4v3h-4z" fill="#bcc8da" stroke="#98a8c2" />
    <path d="M9 7h7v4h1V7h7l2 7H18v3h-3v-3H7z" fill="#a9b8cf" />
    <path d="M9 8h6M18 8h6M8 11h7M18 11h7" stroke="#dfe6f0" />
    <path d="M7 14h8v3h-8z" fill="url(#tube)" />
    <path d="M18 14h8v3h-8z" fill="url(#tube)" />
    <path d="M4 16h10v11H4z" fill="url(#tube)" stroke="#93a4bf" />
    <path d="M19 16h10v11H19z" fill="url(#tube)" stroke="#93a4bf" />
  </svg>
);

const ReplaceIcon = () => (
  <svg width="17" height="17" viewBox="0 0 17 17">
    <text x="0" y="7" fontFamily="Liberation Sans" fontSize="9" fontWeight="700" fill="#8290aa">
      ab
    </text>
    <text x="6" y="15" fontFamily="Liberation Sans" fontSize="9" fontWeight="700" fill="#8290aa">
      ac
    </text>
    <path d="M2 9v3h3M4 10l2 2l-2 2" fill="none" stroke="#8290aa" />
  </svg>
);

const GoToIcon = () => (
  <svg width="16" height="16" viewBox="0 0 16 16">
    <path d="M1.500 6h6V4l5 4l-5 4v-2h-6z" fill="#4f87ea" stroke="#2458b8" />
  </svg>
);

const PointerIcon = () => (
  <svg width="16" height="16" viewBox="0 0 16 16">
    <path d="M2.500 1v11.500l3-2.500l2 4.500l2-1l-2-4.500h4z" fill="#fff" stroke="#5d6b85" />
  </svg>
);

const ShieldIcon = () => (
  <svg width="14" height="17" viewBox="0 0 14 17">
    <path d="M7 1l6 2c0 6 0 10-6 13C1 13 1 9 1 3z" fill="#f7941d" stroke="#68707e" strokeWidth="1.500" />
    <path d="M7 2L2 4c0 3 0 5 1 6c3-1 4-4 4-8z" fill="#fcd978" />
  </svg>
);

const FormIcon = () => (
  <svg width="20" height="18" viewBox="0 0 20 18" shapeRendering="crispEdges">
    <path d="M0 0h19v17H0z" fill="#6f7ea3" />
    <path d="M1 5h17v11H1z" fill="#dfe6f5" />
    <path d="M0 0h19v4H0z" fill="#b8446d" />
    <path d="M1 1h12v2H1z" fill="#d27f9d" />
    <path d="M1 4h17v1H1z" fill="#f3e3ea" />
    <path d="M3 7h4v1H3zM3 12h4v1H3zM9 6h6v4H9zM9 11h6v4H9z" fill="#566a96" />
    <path d="M10 7h4v2h-4zM10 12h4v2h-4z" fill="#fff" />
  </svg>
);

const RecordArrow = ({ d }) => (
  <svg width="8" height="9" viewBox="0 0 8 9">
    <path d={d} fill="currentColor" />
  </svg>
);

const ViewIcon = ({ children }) => (
  <svg width="16" height="14" viewBox="0 0 16 14" shapeRendering="crispEdges">
    {children}
  </svg>
);

/* styles */

const GlobalStyle = createGlobalStyle`
  * {
    box-sizing: border-box;
  }
  body {
    margin: 0;
    font-family: "Noto Sans", "Open Sans", sans-serif;
    font-size: 12px;
    line-height: 16px;
    color: #15428b;
  }
  button,
  input,
  select {
    font: inherit;
    color: inherit;
    margin: 0;
    padding: 0;
    border: 0;
    background: none;
  }
  svg {
    display: block;
    flex: none;
  }
`;

const Window = styled.div`
  min-height: 100vh;
  display: flex;
  flex-direction: column;
  position: relative;
  background: #c3daf9;
`;

const OfficeButton = styled.button`
  position: absolute;
  left: 4px;
  top: 4px;
  border-radius: 50%;
`;

const TitleRow = styled.header`
  display: flex;
  align-items: center;
  height: 29px;
  padding: 1px 8px 0 52px;
  background: linear-gradient(#e4eefb, #d5e5fa 5px, #cbdff8 22px, #e3effd);
  border-bottom: 1px solid #b3cdf3;
`;

const QuickAccess = styled.div`
  display: flex;
  align-items: center;
  gap: 10px;
  height: 26px;
  margin-right: 7px;
  padding: 0 12px;
  border: 1px solid #a3bfe6;
  border-left-color: #b9cfee;
  border-radius: 0 13px 13px 0;
  background: linear-gradient(#dae7f7, #c3d5ee);
`;

const IconButton = styled.button`
  display: flex;
  align-items: center;
  gap: 6px;
`;

const Caret = styled.i`
  display: ${(props) => (props.$inline ? "inline-block" : "block")};
  flex: none;
  width: 0;
  height: 0;
  margin: ${(props) => (props.$inline ? "0 0 2px 4px" : "0")};
  border: 3px solid transparent;
  border-top-color: ${(props) => (props.$muted ? "#a6a6a6" : "#4a74b0")};
  border-bottom: 0;
`;

const WindowTitle = styled.h1`
  flex: 1;
  margin: 0;
  padding: 2px 110px 0 0;
  text-align: center;
  font-size: 13px;
  font-weight: 400;
  color: #2a62b5;
  span {
    color: #5d6b81;
  }
`;

const Controls = styled.div`
  display: flex;
  gap: 16px;
`;

const TabRow = styled.div`
  display: flex;
  align-items: center;
  gap: 16px;
  height: 29px;
  padding: 0 8px 0 60px;
  background: #bfdbff;
`;

const Tabs = styled.nav`
  flex: 1;
  display: flex;
  align-self: flex-end;
  gap: 5px;
  margin-left: -11px;
`;

const Tab = styled.button`
  height: 27px;
  padding: 2px 11px 0;
  border: 1px solid ${(props) => (props.$active ? "#8db2e3" : "transparent")};
  border-bottom: 0;
  border-radius: 4px 4px 0 0;
  background: ${(props) => (props.$active ? "linear-gradient(#f7fbff, #e2edfa)" : "none")};
`;

const RibbonPanel = styled.section`
  display: flex;
  gap: 2px;
  height: 110px;
  margin: 0 2px 7px;
  padding: 2px 1px 1px;
  border: 1px solid #8db2e3;
  border-bottom-color: #74a0d8;
  border-radius: 4px;
  background: linear-gradient(#dfeaf6, #d3e1f1 16px, #c7d8ed 17px, #d6e6f5 84px, #e3f6ff);
`;

const Group = styled.section`
  flex: none;
  width: ${(props) => props.$width};
  display: flex;
  flex-direction: column;
  border: 1px solid #a5c2e4;
  border-radius: 3px;
  background: linear-gradient(#dce6f3, #d2e0f1 14px, #c8d9ee 15px, #dae8f6 84px);
`;

const GroupBody = styled.div`
  flex: 1;
  display: flex;
  gap: ${(props) => props.$gap || "0"};
  padding: 0 ${(props) => props.$pad || "0"};
  ${(props) => !props.$pad && "justify-content: center;"}
`;

const GroupLabel = styled.div`
  display: flex;
  align-items: center;
  justify-content: center;
  height: 20px;
  padding: ${(props) => (props.$launcher ? "0 5px 0 2px" : "0")};
  background: #c1d8f0;
  color: #3e6aaa;
  white-space: nowrap;
  span {
    flex: 1;
    text-align: center;
  }
  svg {
    margin-left: 6px;
  }
`;

const LargeButton = styled.button`
  display: flex;
  flex-direction: column;
  align-items: center;
  justify-content: flex-start;
  height: 84px;
  padding-top: 8px;
  white-space: nowrap;
  color: ${(props) => (props.disabled ? "#8d8d8d" : "#15428b")};
  > svg {
    margin-bottom: 9px;
  }
  > ${Caret} {
    margin-top: 6px;
  }
`;

const CommandColumn = styled.div`
  display: flex;
  flex-direction: column;
  justify-content: space-between;
  padding: 6px 0;
`;

const Command = styled.button`
  display: flex;
  align-items: center;
  gap: 5px;
  height: 18px;
  white-space: nowrap;
  color: ${(props) => (props.disabled ? "#8d8d8d" : "#15428b")};
`;

const Separator = styled.div`
  width: 2px;
  height: 56px;
  margin-top: 14px;
  border-left: 1px solid #9ebae1;
  border-right: 1px solid #f2f7fd;
`;

const FontBody = styled.div`
  flex: 1;
  display: flex;
  flex-direction: column;
  gap: 1px;
  padding: 2px 3px;
`;

const RtfBody = styled(FontBody)`
  gap: 10px;
  padding: 11px 3px;
`;

const FontRow = styled.div`
  display: flex;
  gap: ${(props) => props.$gap || "3px"};
`;

const FontSelect = styled.select`
  width: ${(props) => props.$width};
  height: 27px;
  appearance: none;
  opacity: 1;
  border: 1px solid #b1bfd1;
  background: linear-gradient(135deg, #ababab 50%, transparent 50%) right 5px center / 4px 4px no-repeat,
    linear-gradient(225deg, #ababab 50%, transparent 50%) right 9px center / 4px 4px no-repeat, #efefef;
`;

const ButtonSet = styled.div`
  display: flex;
  border: 1px solid ${(props) => (props.$strong ? "#6f9ad2" : "#92b1dc")};
  border-radius: 3px;
  background: linear-gradient(#d2e1f4, #c9daf1 11px, #bdd0ec 12px, #d2e3f7);
`;

const ToolButton = styled.button`
  display: flex;
  align-items: center;
  justify-content: center;
  gap: 6px;
  width: ${(props) => (props.$wide ? "38px" : "26px")};
  height: 24px;
  font-family: "Liberation Serif", serif;
  font-size: 15px;
  font-weight: 700;
  font-style: ${(props) => (props.$italic ? "italic" : "normal")};
  text-decoration: ${(props) => (props.$underline ? "underline" : "none")};
  color: ${(props) => (props.$faded ? "#7e90b0" : "#4f6389")};
  & + & {
    border-left: 1px solid #b3c9e8;
  }
`;

const SecurityRow = styled.div`
  display: flex;
  align-items: flex-start;
  gap: 9px;
  padding: 0 6px 6px 3px;
  background: #c5dbfa;
  > ${IconButton} {
    margin-top: 5px;
  }
`;

const SecurityMessage = styled.div`
  flex: 1;
  display: flex;
  align-items: center;
  height: 40px;
  padding: 1px 5px 0;
  border: 1px solid #a0bbdb;
  background: linear-gradient(#fff, #f6fbff 50%, #e3f1fc);
  strong {
    margin: 0 18px 0 14px;
  }
`;

const OptionsButton = styled.button`
  width: 115px;
  height: 28px;
  margin-left: 23px;
  border: 1px solid #9dbad8;
  background: #fff;
`;

const Workspace = styled.main`
  flex: 1;
  display: flex;
  padding-left: 3px;
  background: #8aabdc;
`;

const Pane = styled.aside`
  flex: none;
  width: 206px;
  border: 1px solid #6593cf;
  background: #fff;
`;

const PaneHeader = styled.div`
  display: flex;
  align-items: center;
  height: 29px;
  padding: 0 9px 0 6px;
  border-bottom: 2px solid #6593cf;
  background: linear-gradient(#e4effd, #b0d1fb);
`;

const PaneTitle = styled.h2`
  flex: 1;
  margin: 0;
  font-size: 16px;
  font-weight: 400;
  color: #1e4f9c;
`;

const RoundButton = styled.button`
  display: flex;
  align-items: center;
  justify-content: center;
  width: 16px;
  height: 16px;
  border: 1px solid #b5c5dc;
  border-radius: 50%;
  background: #dbe6f5;
`;

const PaneDivider = styled.div`
  width: 1px;
  height: 22px;
  margin: 0 10px 0 3px;
  background: #87abdc;
`;

const FormList = styled.ul`
  margin: 0;
  padding: 0;
  list-style: none;
`;

const FormLink = styled.a`
  display: flex;
  align-items: center;
  gap: 14px;
  height: 30px;
  padding-left: 12px;
  color: #000;
  text-decoration: none;
  background: ${(props) => (props.$selected ? "#dedede" : "none")};
`;

const DocumentPanel = styled.section`
  flex: 1;
  display: flex;
  flex-direction: column;
  margin-left: 6px;
  border: solid #8a8a8a;
  border-width: 1px 0 0 2px;
  background: #efefef;
  box-shadow: -6px 0 #aaccf8;
`;

const FormView = styled.div`
  flex: 1;
  display: flex;
`;

const RecordSelector = styled.div`
  flex: none;
  width: 24px;
  padding: 4px 0 0 11px;
  border-right: 1px solid #000;
  background: #d5e4f3;
`;

const FormFields = styled.form`
  padding: 9px;
`;

const FieldCell = styled.div`
  display: flex;
  flex-direction: column;
  gap: 1px;
  font-family: "Roboto", sans-serif;
  font-size: 14px;
  font-weight: 300;
  color: #000;
`;

const FieldLabel = styled.label`
  height: 19px;
  padding-left: 1px;
  background: #efefef;
  white-space: nowrap;
  line-height: 17px;
`;

const FieldInput = styled.input`
  width: 100%;
  height: 23px;
  padding: 0 1px 7px;
  background: #fff;
  text-align: right;
  outline: none;
  &::selection {
    background: #000;
    color: #fff;
  }
`;

const FieldRow = styled.div`
  display: grid;
  grid-template-columns: ${(props) => props.$columns};
  gap: 1px;
  width: fit-content;
  padding: 0 1px 1px;
  background: #a5a5a5;
  &:first-child {
    padding-top: 1px;
  }
  &:first-child ${FieldInput} {
    height: 22px;
    padding-bottom: 6px;
  }
`;

const RecordNav = styled.div`
  display: flex;
  align-items: center;
  height: 25px;
  padding-left: 4px;
  border: 1px solid #6593cf;
  border-bottom: 0;
  background: linear-gradient(#e6f0fd 50%, #d5e6fc 50%);
`;

const NavLabel = styled.label`
  width: 45px;
`;

const NavButton = styled.button`
  display: flex;
  align-items: center;
  justify-content: center;
  width: 21px;
  color: ${(props) => (props.disabled ? "#a3b9dc" : "#15428b")};
`;

const NavInput = styled.input`
  width: ${(props) => props.$width};
  height: 21px;
  padding: 0 2px;
  border: 1px solid #aac1e4;
  background: #eaf2fc;
  color: #000;
`;

const NavDivider = styled.div`
  width: 1px;
  height: 100%;
  margin: 0 4px;
  background: #6593cf;
`;

const FilterState = styled.button`
  display: flex;
  align-items: center;
  gap: 3px;
  padding: 0 22px;
  color: #a8a596;
`;

const StatusRow = styled.footer`
  display: flex;
  align-items: center;
  height: 27px;
  border-top: 1px solid #567db1;
  background: linear-gradient(#e3eefc, #cadcf6 8px, #adc9f0 9px, #d3e3f9);
  color: #15306b;
`;

const StatusText = styled.div`
  flex: 1;
  padding: 2px 0 0 8px;
`;

const StatusDetail = styled.div`
  flex: 1;
  align-self: stretch;
  margin-right: -130px;
  border-left: 1px solid #8aaada;
`;

const ViewButtons = styled.div`
  display: flex;
  padding: 1px 3px 1px 6px;
  border-left: 1px solid #567db1;
  background: #8fb1e0;
`;

const ViewButton = styled.button`
  display: flex;
  align-items: center;
  justify-content: center;
  width: 22px;
  height: 24px;
  border: 1px solid #7ea3d8;
  border-width: 1px 0 1px 1px;
  background: ${(props) =>
    props.$active
      ? "linear-gradient(#f2d0a4, #eec078 9px, #f1b23c 10px, #fde38a)"
      : "linear-gradient(#cfe0f8, #c3d8f5 9px, #a9c8f1 10px, #cfe2fa)"};
`;

const Taskbar = styled.div`
  display: flex;
  gap: 4px;
  height: 4px;
  padding-left: 45px;
  border-top: 1px solid #2d55a8;
  background: #74b8ea;
`;

const Task = styled.div`
  width: 156px;
  margin-top: 1px;
  border-top: 1px solid ${(props) => (props.$active ? "#0b1334" : "#5d8fce")};
  border-radius: 2px 2px 0 0;
  background: ${(props) => (props.$active ? "#12204d" : "#9ccdf1")};
`;
